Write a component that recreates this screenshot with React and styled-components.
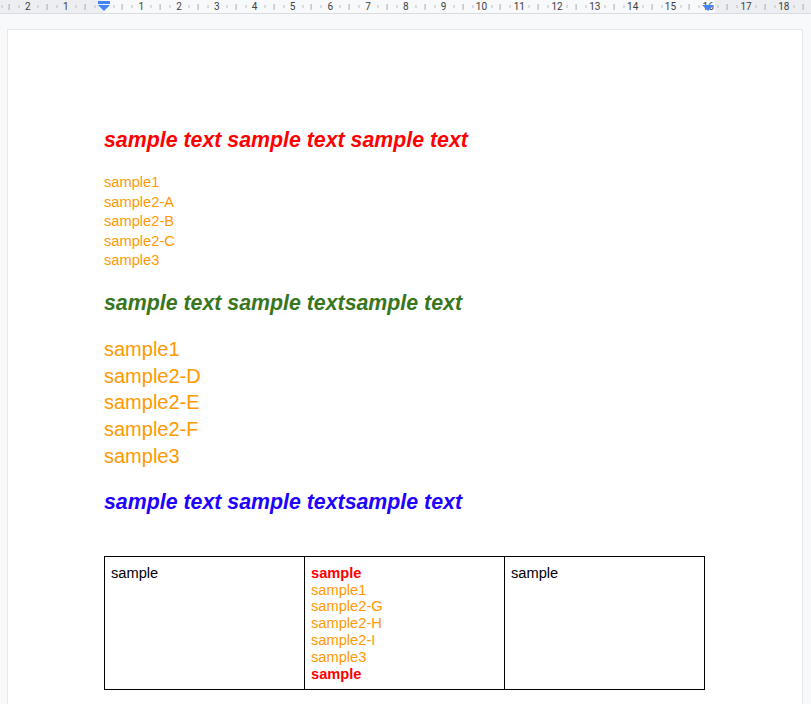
import React from "react";
import styled, { createGlobalStyle } from "styled-components";

const Global = createGlobalStyle`
  html, body { margin: 0; padding: 0; background: #f8f9fa; }
  body { font-family: "Liberation Sans", Arial, sans-serif; overflow: hidden; }
`;

const CM = 37.8;
const ORIGIN = 103.5;

const Ruler = styled.div`
  position: relative;
  height: 13px;
  border-bottom: 1px solid #dadce0;
  background-color: #eceef1;
  background-image:
    repeating-linear-gradient(to right, #a7abb0 0 1px, transparent 1px ${CM}px),
    repeating-linear-gradient(to right, #b9bcc0 0 1px, transparent 1px ${CM / 2}px),
    linear-gradient(to right, #eceef1 0 ${ORIGIN}px, #f8f9fa ${ORIGIN}px 707.5px, #eceef1 707.5px);
  background-size: 100% 6px, 100% 3px, 100% 100%;
  background-position: 8.6px 4px, 18.5px 5px, 0 0;
  background-repeat: repeat-x, repeat-x, no-repeat;
  display: flex;
  padding-left: ${ORIGIN - CM * 2 - CM / 2}px;
  overflow: hidden;
`;

const Num = styled.span`
  flex: 0 0 ${CM}px;
  text-align: center;
  font-family: "Roboto", "Liberation Sans", sans-serif;
  font-size: 10px;
  line-height: 13px;
  color: #3c4043;
`;

const NumLabel = styled.span`
  display: inline-block;
  padding: 0 1px;
  background: ${(p) => p.$bg};
`;

const Marker = styled.div`
  position: absolute;
  top: 1px;
  left: ${(p) => p.$x - 6}px;
  width: 12px;
  height: 10px;
  display: flex;
  flex-direction: column;
  align-items: center;
`;

const MarkerBar = styled.div`
  width: 12px;
  height: 3px;
  background: ${(p) => (p.$hidden ? "transparent" : "#4285f4")};
  margin-bottom: 1px;
`;

const MarkerTri = styled.div`
  width: 0;
  height: 0;
  border-left: 6px solid transparent;
  border-right: 6px solid transparent;
  border-top: 6px solid #4285f4;
`;

const Canvas = styled.div`
  padding: 16px 0 0 8px;
`;

const Page = styled.div`
  width: 794px;
  min-height: 700px;
  box-sizing: border-box;
  background: #fff;
  box-shadow: 0 0 0 1px #e6e8eb;
  padding: 96px 96px 40px 96px;
`;

const Heading = styled.div`
  font-family: "Liberation Sans", Arial, sans-serif;
  font-size: 21.33px;
  line-height: 28px;
  font-weight: 700;
  font-style: italic;
  color: ${(p) => p.$color};
  margin-top: ${(p) => p.$mt || 0}px;
  white-space: nowrap;
`;

const List = styled.div`
  margin-top: ${(p) => p.$mt}px;
  display: flex;
  flex-direction: column;
  align-items: flex-start;
`;

const Item = styled.div`
  font-size: ${(p) => p.$size}px;
  line-height: ${(p) => p.$lh}px;
  color: #ff9900;
`;

const Table = styled.table`
  margin-top: 40px;
  width: 601px;
  border-collapse: collapse;
  table-layout: fixed;
`;

const Cell = styled.td`
  border: 1px solid #000;
  vertical-align: top;
  padding: 8px 7px 6px 6px;
  font-size: 14.67px;
  line-height: 16.87px;
  color: #000;
`;

const CellLine = styled.div`
  color: ${(p) => p.$color};
  font-weight: ${(p) => (p.$bold ? 700 : 400)};
  white-space: nowrap;
`;

const nums = [2, 1, "", 1, 2, 3, 4, 5, 6, 7, 8, 9, 10, 11, 12, 13, 14, 15, 16, 17, 18];

export default function App() {
  return (
    <>
      <Global />
      <Ruler>
        {nums.map((n, i) => (
          <Num key={i}>
            {n !== "" && <NumLabel $bg={i < 2 || i > 18 ? "#eceef1" : "#f8f9fa"}>{n}</NumLabel>}
          </Num>
        ))}
        <Marker $x={ORIGIN}>
          <MarkerBar />
          <MarkerTri />
        </Marker>
        <Marker $x={707.5}>
          <MarkerBar $hidden />
          <MarkerTri />
        </Marker>
      </Ruler>
      <Canvas>
        <Page>
          <Heading $color="#ff0000">sample text sample text sample text</Heading>
          <List $mt={19}>
            {["sample1", "sample2-A", "sample2-B", "sample2-C", "sample3"].map((t) => (
              <Item key={t} $size={14.67} $lh={19.5}>{t}</Item>
            ))}
          </List>
          <Heading $color="#38761d" $mt={18.5}>sample text sample textsample text</Heading>
          <List $mt={19.2}>
            {["sample1", "sample2-D", "sample2-E", "sample2-F", "sample3"].map((t) => (
              <Item key={t} $size={20} $lh={26.6}>{t}</Item>
            ))}
          </List>
          <Heading $color="#2000ff" $mt={18.5}>sample text sample textsample text</Heading>
          <Table>
            <tbody>
              <tr>
                <Cell>sample</Cell>
                <Cell>
                  <CellLine $color="#ff0000" $bold>sample</CellLine>
                  <CellLine $color="#ff9900">sample1</CellLine>
                  <CellLine $color="#ff9900">sample2-G</CellLine>
                  <CellLine $color="#ff9900">sample2-H</CellLine>
                  <CellLine $color="#ff9900">sample2-I</CellLine>
                  <CellLine $color="#ff9900">sample3</CellLine>
                  <CellLine $color="#ff0000" $bold>sample</CellLine>
                </Cell>
                <Cell>sample</Cell>
              </tr>
            </tbody>
          </Table>
        </Page>
      </Canvas>
    </>
  );
}
